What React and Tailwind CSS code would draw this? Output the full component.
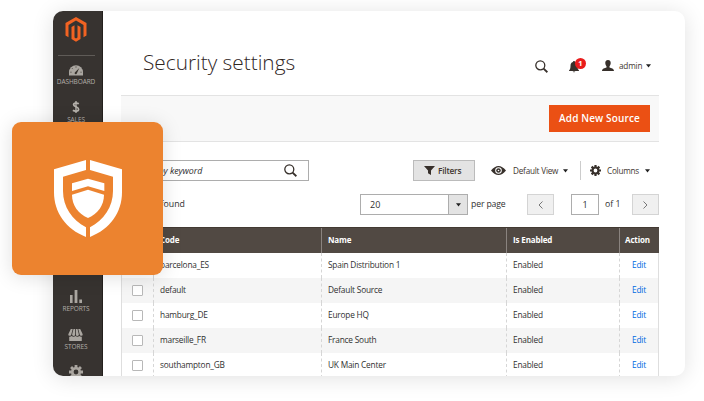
import React from "react";

const rows = [
  ["barcelona_ES", "Spain Distribution 1"],
  ["default", "Default Source"],
  ["hamburg_DE", "Europe HQ"],
  ["marseille_FR", "France South"],
  ["southampton_GB", "UK Main Center"],
];

function MagentoLogo() {
  return (
    <svg className="h-[25px] w-[22px] shrink-0" viewBox="0 0 22 25" fill="#f26322">
      <path d="M11 0 21.5 6.1v12.3l-3 1.8V7.9L11 3.5 3.5 7.9v12.3l-3-1.8V6.1Z" />
      <path d="m9.5 8.2-3 1.7v12.2L11 24.8l4.5-2.7V9.9l-3-1.7v12.4L11 21.5l-1.5-.9Z" />
    </svg>
  );
}

function GaugeIcon() {
  return (
    <svg className="h-[11px] w-[14px]" viewBox="0 0 14 11">
      <path d="M0 10.4V7.2a7 7 0 0 1 14 0v3.2Z" fill="#aaa6a0" />
      <path d="M7 1.2v1.6M2.8 3l1.1 1.1M1.2 7.2h1.5M11.3 7.2h1.5" stroke="#37322d" strokeWidth=".6" />
      <path d="m5.8 7.400 4.500-4.500-2.500 5.700a1.100 1.100 0 1 1-2-1.200Z" fill="#37322d" />
    </svg>
  );
}

function BarsIcon() {
  return (
    <svg className="h-[13px] w-[12px]" viewBox="0 0 12 13" fill="#aaa6a0">
      <path d="M0 5h2.6v8H0zM4.6 0h2.8v13H4.6zM9.3 9.4H12V13H9.3z" />
    </svg>
  );
}

function StoreIcon() {
  return (
    <svg className="h-[12px] w-[15px]" viewBox="0 0 15 12" fill="#aaa6a0">
      <path d="M2.8 0h1.9L3.3 5.5a1.5 1.5 0 0 1-3-.3ZM5.5 0h1.6v5.4a1.5 1.5 0 0 1-3 .1ZM7.9 0h1.6l1.4 5.5a1.5 1.5 0 0 1-3-.1ZM10.3 0h1.9l2.5 5.2a1.5 1.5 0 0 1-3 .3Z" />
      <path d="M1.2 7.700c1 .2 1.800-.1 2.400-.7 1.100 1 2.800 1 3.900 0 1.100 1 2.800 1 3.900 0 .6.6 1.400.9 2.400.7V12H1.200Z" />
    </svg>
  );
}

function GearIcon({ className }) {
  return (
    <svg className={className} viewBox="-6 -6 12 12" fill="none" stroke="currentColor">
      <circle r="3.2" strokeWidth="2.3" />
      {[0, 45, 90, 135].map((a) => (
        <path key={a} d="M0-6v2.300M0 3.700V6" strokeWidth="2.400" transform={`rotate(${a})`} />
      ))}
    </svg>
  );
}

function SearchIcon() {
  return (
    <svg className="block h-[13px] w-[13px]" viewBox="0 0 13 13" fill="none" stroke="#37302b">
      <circle cx="5.300" cy="5.300" r="4.500" strokeWidth="1.300" />
      <path d="m8.600 8.600 3.800 3.600" strokeWidth="1.900" />
    </svg>
  );
}

function Caret() {
  return (
    <svg className="block h-[4px] w-[5px] shrink-0" viewBox="0 0 5 4" fill="#222">
      <path d="M0 .3h5L2.500 3.600Z" />
    </svg>
  );
}

function Shield() {
  return (
    <svg className="h-[77px] w-[68px]" viewBox="162 150 204 231" fill="#fff">
      <path d="m162 178 96-28v30l-69 20v43c0 48 27 86 69 109v29c-60-23-96-74-96-134Z" />
      <path d="m366 178-96-28v30l69 20v43c0 48-27 86-69 109v29c60-23 96-74 96-134Z" />
      <path d="m216 220 48-14 49 14v23l-49-14-48 14Z" />
      <path d="m216 254 48-15 48 15c0 32-18 56-48 70-30-14-48-38-48-70Z" />
    </svg>
  );
}

function NavLabel({ children }) {
  return <span className="block text-[6.500px] leading-[9px] tracking-[-0.100px] text-[#b2aea8]">{children}</span>;
}

function Sidebar() {
  return (
    <nav className="flex w-[50px] shrink-0 flex-col items-center border-r border-[#24201d] bg-[#373330] pr-[3px] pt-[6px]">
      <MagentoLogo />
      <div className="mt-[13px] h-px w-[37px] shrink-0 bg-[#5f5b57]" />
      <div className="mt-[9px] flex h-[35px] shrink-0 flex-col items-center">
        <GaugeIcon />
        <span className="mt-[1px]"><NavLabel>DASHBOARD</NavLabel></span>
      </div>
      <div className="flex h-[190px] shrink-0 flex-col items-center">
        <svg className="h-[14px] w-[8px]" viewBox="0 0 8 14" fill="none" stroke="#b5b1ab">
          <path d="M4 1v12" strokeWidth="1.400" />
          <path d="M6.800 3.800C5.500 3 1.600 2.500 1.600 4.700c0 2.400 5 1.800 5 4.500 0 2.500-4.200 2.200-5.700 1.100" strokeWidth="1.700" />
        </svg>
        <span className="mt-[1px]"><NavLabel>SALES</NavLabel></span>
      </div>
      <div className="flex h-[39px] shrink-0 flex-col items-center">
        <BarsIcon />
        <span className="mt-[1px]"><NavLabel>REPORTS</NavLabel></span>
      </div>
      <div className="flex h-[36px] shrink-0 flex-col items-center">
        <StoreIcon />
        <span className="mt-[1px]"><NavLabel>STORES</NavLabel></span>
      </div>
      <GearIcon className="h-[14px] w-[14px] shrink-0 text-[#aaa6a0]" />
    </nav>
  );
}

function Header() {
  return (
    <header className="flex h-[84px] items-start pl-[22px]">
      <h1 className="mt-[38px] w-[392px] text-[20.800px] font-light leading-[27px] text-[#30261f]">Security settings</h1>
      <div className="mt-[49px]"><SearchIcon /></div>
      <div className="relative ml-[21px] mt-[50px]">
        <svg className="block h-[12px] w-[10px]" viewBox="0 0 10 12" fill="#37302b">
          <path d="M5 0c.7 0 1 .5 1 1 2 .5 2.500 2 2.500 4 0 2.500.5 3.500 1.500 4.500v.6H0v-.6C1 8.500 1.500 7.500 1.500 5c0-2 .5-3.500 2.500-4 0-.5.3-1 1-1ZM3.700 10.600h2.600C6.100 11.500 3.900 11.500 3.700 10.600Z" />
        </svg>
        <span className="absolute -top-[3px] left-[6px] flex h-[11px] w-[11px] items-center justify-center rounded-full bg-[#e91c1c] text-[7.500px] font-bold leading-none text-white">1</span>
      </div>
      <svg className="ml-[23px] mt-[49px] h-[11px] w-[12px]" viewBox="0 0 12 11" fill="#37302b">
        <path d="M6 0c2 0 2.900 1.300 2.700 3.200C8.600 4.800 8 5.600 7.500 6.200v1.300c1.700.8 4.500.9 4.500 3.500H0c0-2.600 2.800-2.700 4.500-3.500V6.200C4 5.600 3.400 4.800 3.300 3.200 3.100 1.300 4 0 6 0Z" />
      </svg>
      <span className="ml-[5px] mt-[49px] w-[27px] text-[8.200px] leading-[12px] tracking-[-0.200px] text-[#41362f]">admin</span>
      <div className="mt-[53px]"><Caret /></div>
    </header>
  );
}

function Toolbar() {
  return (
    <>
      <div className="flex h-[21px]">
        <div className="flex w-[188px] items-center justify-between border border-[#adadad] pl-[8px] pr-[11px]">
          <span className="text-[8.900px] italic leading-[12px] tracking-[-0.050px] text-[#303030]">Search by keyword</span>
          <SearchIcon />
        </div>
        <div className="ml-[104px] flex w-[62px] items-center border border-[#bbb] bg-[#e3e3e3] pl-[10px]">
          <svg className="h-[9px] w-[11px]" viewBox="0 0 11 9" fill="#37302b"><path d="M0 0h11L7 4.500V9L4 7.300V4.500Z" /></svg>
          <span className="ml-[3px] text-[8.300px] font-semibold leading-[12px] tracking-[-0.200px] text-[#41362f]">Filters</span>
        </div>
        <div className="ml-[16px] flex w-[89px] items-center">
          <svg className="h-[9px] w-[15px]" viewBox="0 0 15 9">
            <path fill="#37302b" fillRule="evenodd" d="M0 4.500Q7.500-4.500 15 4.500 7.500 13.500 0 4.500Zm7.500-3.300a3.300 3.300 0 1 0 0 6.600 3.300 3.300 0 0 0 0-6.600Z" />
            <circle cx="7.500" cy="4.500" r="2.300" fill="#37302b" /><circle cx="7.500" cy="4.500" r=".8" fill="#fff" />
          </svg>
          <span className="ml-[7px] w-[50px] whitespace-nowrap text-[8.200px] leading-[12px] tracking-[-0.220px] text-[#41362f]">Default View</span>
          <Caret />
        </div>
        <div className="my-[1px] flex items-center border-l border-[#ccc] pl-[9px]">
          <GearIcon className="h-[11px] w-[11px] text-[#37302b]" />
          <span className="ml-[6px] w-[38px] text-[8.200px] leading-[12px] tracking-[-0.250px] text-[#41362f]">Columns</span>
          <Caret />
        </div>
      </div>
      <div className="mt-[13px] flex h-[21px] items-stretch text-[9px] text-[#303030]">
        <span className="flex w-[239px] items-center pl-[8px]"><span className="flex w-[56px] justify-end whitespace-nowrap text-[8.800px]">5 records found</span></span>
        <div className="flex w-[108px] border border-[#adadad]">
          <span className="flex flex-1 items-center pl-[9px]">20</span>
          <span className="flex w-[19px] items-center justify-center border-l border-[#adadad] bg-[#e3e3e3]"><Caret /></span>
        </div>
        <span className="ml-[3px] flex w-[56px] items-center pt-[1px] text-[8.700px] tracking-[-0.150px]">per page</span>
        <div className="flex w-[27px] items-center justify-center border border-[#d4d4d4] bg-[#f0f0f0]">
          <svg className="h-[8px] w-[5px]" viewBox="0 0 5 8" fill="none" stroke="#777"><path d="M4.500.5 1 4l3.500 3.500" /></svg>
        </div>
        <div className="ml-[17px] flex w-[28px] items-center justify-center border border-[#adadad]">1</div>
        <span className="ml-[6px] flex w-[27px] items-center pt-[1px] text-[8.700px]">of 1</span>
        <div className="flex w-[27px] items-center justify-center border border-[#d4d4d4] bg-[#f0f0f0]">
          <svg className="h-[8px] w-[5px]" viewBox="0 0 5 8" fill="none" stroke="#777"><path d="M.5.5 4 4 .5 7.500" /></svg>
        </div>
      </div>
    </>
  );
}

function Table() {
  return (
    <div className="mt-[12px] w-[538px] text-[8.300px]">
      <div className="grid h-[26px] grid-cols-[33px_168px_185px_113px_39px] border-t border-[#433a33] bg-[#514943] text-[8px] font-bold leading-[23px] tracking-[-0.130px] text-white">
        <span />
        <span className="border-r border-[#8a837f] pl-[6px]">Code</span>
        <span className="border-r border-[#8a837f] pl-[6px]">Name</span>
        <span className="border-r border-[#8a837f] pl-[6px]">Is Enabled</span>
        <span className="pl-[5px]">Action</span>
      </div>
      <div className="border-x border-[#dedede] tracking-[-0.200px]">
        {rows.map(([code, name], i) => (
          <div key={code} className={`grid h-[25px] grid-cols-[32px_168px_185px_113px_38px] leading-[23px] text-[#303030] ${i % 2 ? "bg-[#f5f5f5]" : "bg-white"}`}>
            <span className="border-r border-dashed border-[#d6d6d6] pl-[10px] pt-[7px]">
              <span className="block h-[11px] w-[11px] rounded-[1px] border border-[#b8b8b8] bg-white" />
            </span>
            <span className="border-r border-dashed border-[#d6d6d6] pl-[6px]">{code}</span>
            <span className="border-r border-dashed border-[#d6d6d6] pl-[6px]">{name}</span>
            <span className="border-r border-dashed border-[#d6d6d6] pl-[6px]">Enabled</span>
            <span className="pl-[12px] text-[#0068e1]">Edit</span>
          </div>
        ))}
      </div>
    </div>
  );
}

export default function App() {
  return (
    <div className="relative h-[401px] w-[704px] overflow-hidden bg-white pl-[53px] pt-[11px] font-['Open_Sans',sans-serif]">
      <div className="flex h-[365px] w-[632px] overflow-hidden rounded-[10px] bg-white shadow-[0_2px_22px_rgba(0,0,0,0.12)]">
        <Sidebar />
        <main className="w-[556px] shrink-0 pl-[18px]">
          <Header />
          <div className="mb-[18px] flex h-[47px] items-center justify-end border-y border-[#e3e3e3] bg-[#f8f8f8] pr-[9px]">
            <button className="h-[27px] w-[101px] bg-[#eb5014] pb-[1px] text-[10px] font-semibold leading-[26px] tracking-[0.130px] text-white">Add New Source</button>
          </div>
          <Toolbar />
          <Table />
        </main>
      </div>
      <div className="absolute left-[12px] top-[122px] flex h-[153px] w-[151px] items-center justify-center rounded-[9px] bg-[#ec832f] pb-[1px] shadow-[0_2px_20px_rgba(0,0,0,0.13)]">
        <Shield />
      </div>
    </div>
  );
}
